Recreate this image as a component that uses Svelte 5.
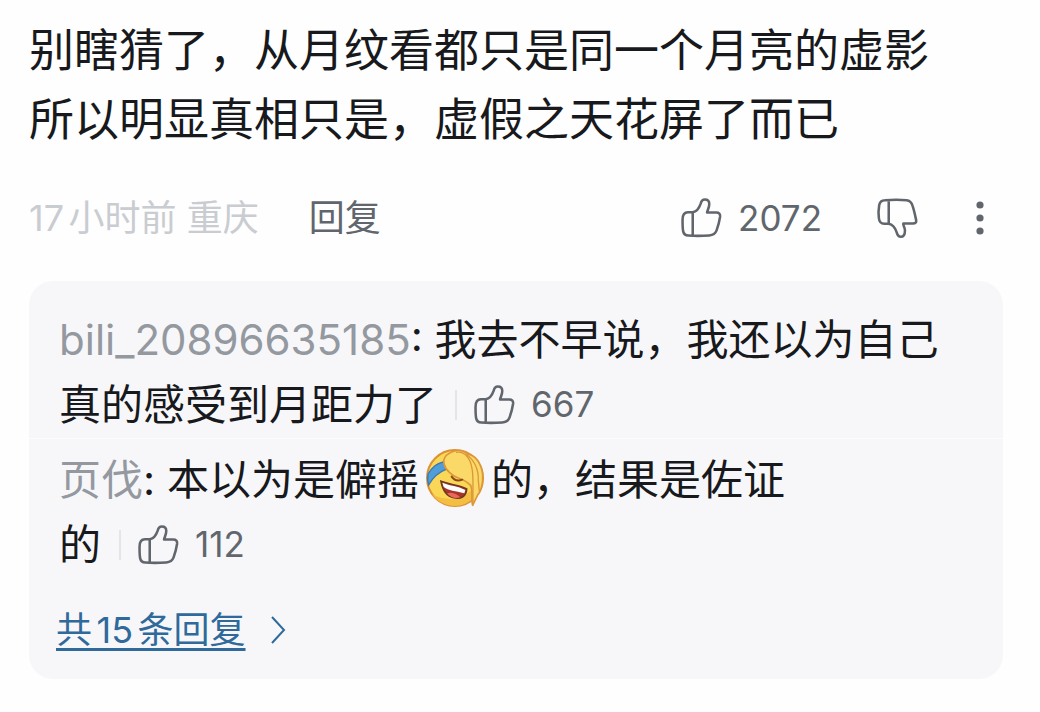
<script lang="ts">
    interface Reply {
        user: string;
        before: string;
        emote?: boolean;
        after?: string;
        // last character stays on the same line as the like counter
        tail: string;
        likes: number;
    }

    const title = ["别瞎猜了，从月纹看都只是同一个月亮的虚影", "所以明显真相只是，虚假之天花屏了而已"];

    const replies: Reply[] = [
        {
            user: "bili_20896635185",
            before: "我去不早说，我还以为自己真的感受到月距力",
            tail: "了",
            likes: 667,
        },
        {
            user: "页伐",
            before: "本以为是僻摇",
            emote: true,
            after: "的，结果是佐证",
            tail: "的",
            likes: 112,
        },
    ];
</script>

{#snippet thumbUp()}
    <svg class="icon" viewBox="0 0 132 132" aria-hidden="true">
        <path
            d="M40 48H25C13 48 8 56 8 72C8 86 8 99 10 108C12 118 17 121 26 121C50 123 76 122 92 121C105 120 111 116 115 105C120 91 124 75 126 62C127 53 123 49 114 49H85C87 40 92 32 92 22C92 13 86 8 78 8C70 8 67 13 65 21C60 36 52 46 40 48V121"
        />
    </svg>
{/snippet}

{#snippet thumbDown()}
    <svg class="icon" viewBox="0 0 132 132" aria-hidden="true">
        <path
            d="M40 84H26C15 84 10 78 9 66C7 52 8 38 10 26C12 14 17 10 28 10C52 8 76 8 96 10C107 11 112 17 115 28C120 43 123 58 126 72C128 80 124 83 116 83H86C84 90 91 94 91 105C91 118 87 125 78 125C70 125 67 119 65 111C60 96 52 86 40 84V10"
        />
    </svg>
{/snippet}

<main class="comment">
    <p class="text">
        {#each title as line}
            <span>{line}</span>
        {/each}
    </p>

    <div class="bar">
        <span class="when">17小时前 重庆</span>
        <button class="reply-btn">回复</button>
        <button class="like" aria-label="点赞 2072">
            {@render thumbUp()}
            <span>2072</span>
        </button>
        <button class="dislike" aria-label="点踩">{@render thumbDown()}</button>
        <button class="more" aria-label="更多">
            <svg viewBox="0 0 8 34" aria-hidden="true">
                <circle cx="4" cy="4" r="3.6" />
                <circle cx="4" cy="17" r="3.6" />
                <circle cx="4" cy="30" r="3.6" />
            </svg>
        </button>
    </div>

    <section class="replies" aria-label="回复">
        {#each replies as r}
            <p class="reply">
                <span class="user">{r.user}</span>: {r.before}{#if r.emote}<svg
                        class="emote"
                        viewBox="0 0 180 180"
                        role="img"
                        aria-label="笑哭"
                    >
                        <circle cx="90" cy="90" r="84" fill="#fbd758" stroke="#dc9232" stroke-width="6" />
                        <path d="M20 138C52 180 112 188 148 148L136 128C106 158 64 160 20 138Z" fill="#f4bd43" />
                        <path d="M9 78C23 56 34 47 59 40L63 64C39 73 24 87 11 111C7 99 7 90 9 78Z" fill="#4f9ed9" stroke="#3977b0" stroke-width="4" />
                        <path
                            d="M63 23C86 3 112 4 126 17C153 23 168 46 173 78C174 105 170 128 158 141L143 172C137 153 145 130 137 112C126 101 112 94 100 90C88 86 80 80 74 74C56 58 51 38 63 23Z"
                            fill="#fbd969"
                            stroke="#dc9838"
                            stroke-width="5"
                            stroke-linejoin="round"
                        />
                        <path d="M93 13C119 8 136 31 141 61C146 84 143 108 144 164M124 19C149 38 161 63 160 98L163 130" fill="none" stroke="#dc9838" stroke-width="4" />
                        <path d="M48 100C76 111 98 109 125 123C124 145 108 154 86 149C63 145 53 126 48 100Z" fill="#a9352a" stroke="#70391e" stroke-width="5" />
                        <path d="M52 104C76 114 98 113 121 126L118 136C91 129 71 128 56 117Z" fill="#fff" />
                        <path d="M66 136C82 130 97 138 106 148C91 153 76 149 66 136Z" fill="#e9675b" />
                        <path d="M80 86C88 98 101 99 112 95" fill="none" stroke="#8b4b1d" stroke-width="6" stroke-linecap="round" />
                    </svg>{/if}{r.after ?? ""}<span class="tail"
                    >{r.tail}<button class="like small" aria-label="点赞 {r.likes}">
                        {@render thumbUp()}
                        <span>{r.likes}</span>
                    </button></span
                >
            </p>
        {/each}

        <a class="all" href="#replies">
            <span>共15条回复</span>
            <svg viewBox="0 0 16 28" aria-hidden="true"><path d="M2 1L14 14L2 27" /></svg>
        </a>
    </section>
</main>

<style>
    :global(body) {
        background: #fefefe;
    }

    .comment {
        --ink: #18191c;
        --grey: #61666d;
        --line: #e3e5e7;

        box-sizing: border-box;
        padding: 16px 37px 32px 29px;
        color: var(--ink);
        font-family: Inter, "Noto Sans CJK SC", sans-serif;
    }

    p {
        margin: 0;
    }

    button {
        display: inline-flex;
        align-items: center;
        padding: 0;
        border: 0;
        background: none;
        color: var(--grey);
        font: inherit;
        cursor: pointer;
    }

    .text {
        font-size: 45px;
        line-height: 69px;
    }
    .text span {
        display: block;
    }

    .icon {
        width: 42px;
        height: 42px;
        flex: none;
        fill: none;
        stroke: currentColor;
        stroke-width: 8;
        stroke-linejoin: round;
    }

    .bar {
        display: flex;
        align-items: center;
        height: 52px;
        margin: 38px 0 37px;
        font-size: 36px;
        line-height: 52px;
        text-autospace: normal;
    }
    .when {
        color: #c9ccd0;
    }
    .reply-btn {
        margin-left: 50px;
    }
    .like {
        gap: 16px;
        margin-left: auto;
        font-size: 35px;
    }
    .dislike {
        margin-left: 54px;
    }
    .more {
        margin: 0 19px 0 58px;
    }
    .more svg {
        width: 8px;
        height: 34px;
        fill: currentColor;
    }

    .replies {
        padding: 26px 0 23px;
        border-radius: 24px;
        background: #f7f7fa;
    }
    .reply {
        padding: 0 40px 0 30px;
        font-size: 42px;
        line-height: 65px;
    }
    .reply + .reply {
        margin-top: 1px;
        padding-top: 8px;
        border-top: 1px solid #fcfcfd;
    }
    .user {
        color: #9499a0;
    }
    .tail {
        white-space: nowrap;
    }
    .small {
        height: 65px;
        margin-left: 18px;
        vertical-align: top;
    }
    .small::before {
        width: 2px;
        height: 30px;
        background: var(--line);
        content: "";
    }
    .emote {
        width: 60px;
        height: 60px;
        margin: 1px 6px 4px;
        vertical-align: top;
    }

    .all {
        display: inline-flex;
        align-items: center;
        gap: 24px;
        margin: 27px 0 0 27px;
        color: #2f6a9a;
        font-size: 36px;
        line-height: 52px;
        text-decoration: none;
        text-autospace: normal;
    }
    .all span {
        text-decoration: underline;
        text-decoration-thickness: 3px;
        text-underline-offset: 5px;
    }
    .all svg {
        width: 16px;
        height: 28px;
        fill: none;
        stroke: currentColor;
        stroke-width: 2;
    }
</style>
